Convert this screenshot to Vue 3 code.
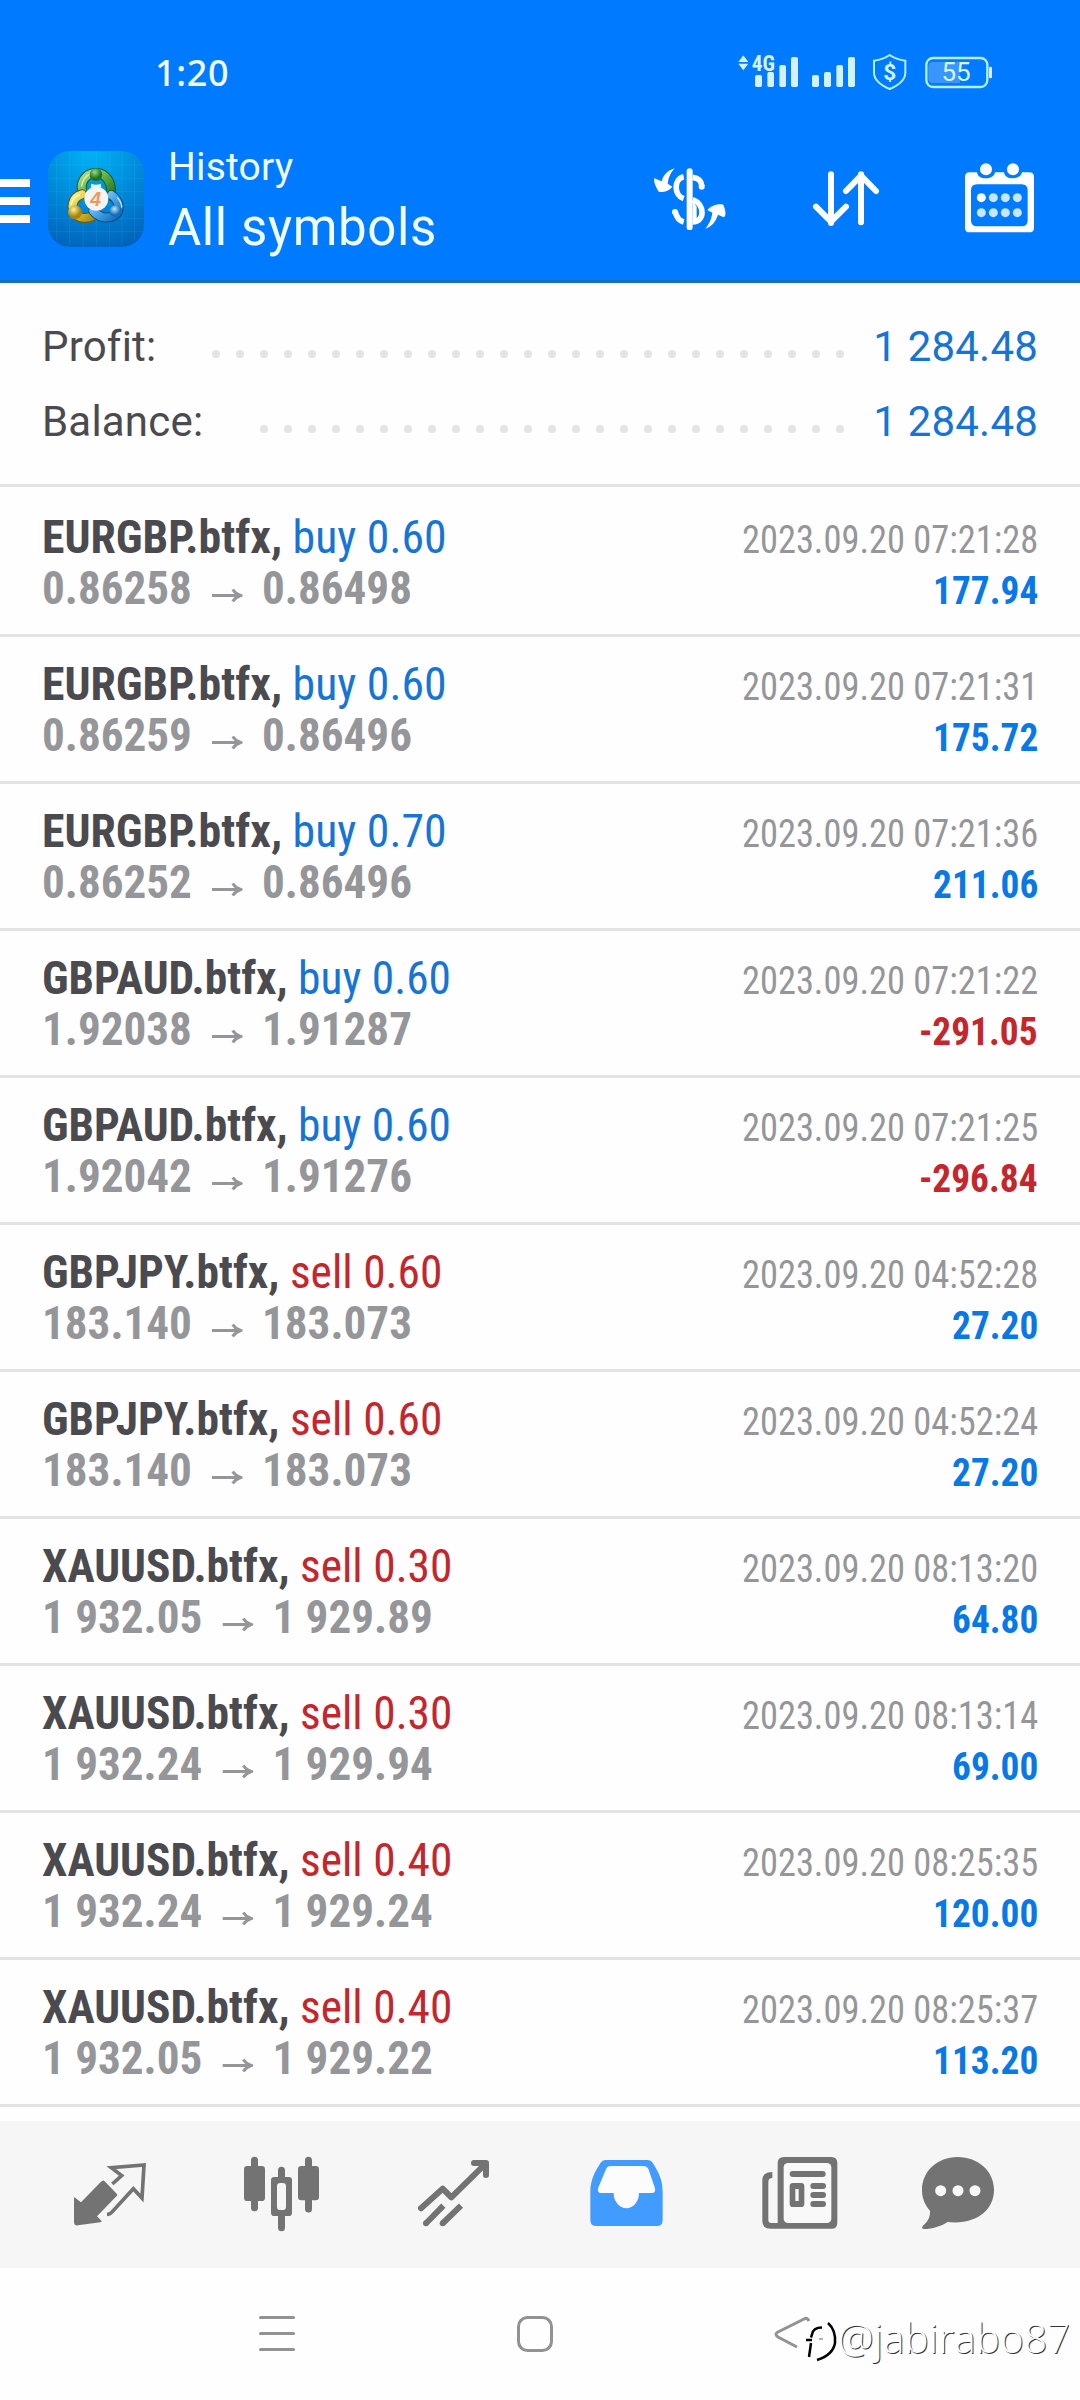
<script setup>
const summary = [
  { label: 'Profit:', value: '1 284.48', dots: 27 },
  { label: 'Balance:', value: '1 284.48', dots: 25 },
]

const raw = [
  ['EURGBP', 'buy 0.60', '0.86258', '0.86498', '2023.09.20 07:21:28', '177.94'],
  ['EURGBP', 'buy 0.60', '0.86259', '0.86496', '2023.09.20 07:21:31', '175.72'],
  ['EURGBP', 'buy 0.70', '0.86252', '0.86496', '2023.09.20 07:21:36', '211.06'],
  ['GBPAUD', 'buy 0.60', '1.92038', '1.91287', '2023.09.20 07:21:22', '-291.05'],
  ['GBPAUD', 'buy 0.60', '1.92042', '1.91276', '2023.09.20 07:21:25', '-296.84'],
  ['GBPJPY', 'sell 0.60', '183.140', '183.073', '2023.09.20 04:52:28', '27.20'],
  ['GBPJPY', 'sell 0.60', '183.140', '183.073', '2023.09.20 04:52:24', '27.20'],
  ['XAUUSD', 'sell 0.30', '1 932.05', '1 929.89', '2023.09.20 08:13:20', '64.80'],
  ['XAUUSD', 'sell 0.30', '1 932.24', '1 929.94', '2023.09.20 08:13:14', '69.00'],
  ['XAUUSD', 'sell 0.40', '1 932.24', '1 929.24', '2023.09.20 08:25:35', '120.00'],
  ['XAUUSD', 'sell 0.40', '1 932.05', '1 929.22', '2023.09.20 08:25:37', '113.20'],
]
const deals = raw.map(([symbol, side, open, close, time, profit]) => ({
  symbol: symbol + '.btfx,', side, open, close, time, profit,
  euro: symbol === 'EURGBP',
  sell: side.startsWith('sell'), loss: profit.startsWith('-'),
}))
</script>

<template>
  <div class="screen">
    <header class="header">
      <div class="status">
        <span class="clock">1:20</span>
        <svg class="status-icons" width="320" height="70" viewBox="0 0 960 210">
          <g fill="#d3f1ff">
            <path d="M115 66 130 46l15 20zM115 71h30l-15 20z" />
            <text x="155" y="92" class="net">4G</text>
            <rect x="165" y="105" width="21" height="36" rx="5" />
            <rect x="202" y="96" width="20" height="45" rx="5" />
            <rect x="238" y="75" width="20" height="66" rx="5" />
            <rect x="273" y="51" width="21" height="90" rx="5" />
            <rect x="336" y="105" width="21" height="36" rx="5" />
            <rect x="372" y="96" width="21" height="45" rx="5" />
            <rect x="409" y="75" width="20" height="66" rx="5" />
            <rect x="444" y="51" width="21" height="90" rx="5" />
            <text x="569" y="119" class="dollar">$</text>
            <rect x="867" y="80" width="9" height="35" rx="4" />
          </g>
          <path d="M569 45C583 55 600 60 616 62V98c0 24-22 38-47 49-25-11-47-25-47-49V62c16-2 33-7 47-17z" fill="none" stroke="#b5f0ff" stroke-width="6" />
          <path d="M698 66h82v63h-82q-13 0-13-13V79q0-13 13-13z" fill="#3a96ff" />
          <rect x="679" y="54" width="183" height="87" rx="20" fill="none" stroke="#b5f0ff" stroke-width="7" />
          <text x="768" y="123" class="level" fill="#d3f6ff">55</text>
        </svg>
      </div>
      <div class="appbar">
        <svg class="burger" width="30" height="44" viewBox="0 0 30 44" fill="#fff">
          <path d="M0 0h30v8H0zM0 18h30v8H0zM0 36h30v8H0z" />
        </svg>
        <svg class="logo" width="96" height="96" viewBox="0 0 288 288">
          <defs>
            <radialGradient id="tile" cx=".45" cy="0" r="1.05">
              <stop offset="0" stop-color="#00b4f4" />
              <stop offset=".5" stop-color="#008bda" />
              <stop offset="1" stop-color="#0062bb" />
            </radialGradient>
            <linearGradient id="green" x2="1" y2="1"><stop stop-color="#b8e08f" /><stop offset=".5" stop-color="#5cad45" /><stop offset="1" stop-color="#207522" /></linearGradient>
            <linearGradient id="gold" x2="1" y2="1"><stop stop-color="#f5f08a" /><stop offset=".6" stop-color="#d0b626" /><stop offset="1" stop-color="#a48612" /></linearGradient>
            <linearGradient id="sky" x2="1" y2="1"><stop stop-color="#a8dcff" /><stop offset=".5" stop-color="#49a5e8" /><stop offset="1" stop-color="#126bb8" /></linearGradient>
            <radialGradient id="greenBall" cx=".4" cy=".3"><stop stop-color="#9bd889" /><stop offset="1" stop-color="#1e7425" /></radialGradient>
            <radialGradient id="goldBall" cx=".4" cy=".3"><stop stop-color="#fff29a" /><stop offset="1" stop-color="#a9860b" /></radialGradient>
            <radialGradient id="skyBall" cx=".4" cy=".3"><stop stop-color="#b8e6ff" /><stop offset="1" stop-color="#156db9" /></radialGradient>
          </defs>
          <rect width="288" height="288" rx="66" fill="url(#tile)" />
          <path d="M26 20v248M65 4v280M105 0v288M145 0v288M185 0v288M222 4v280M260 20v248M4 42h280M0 82h288M0 122h288M0 162h288M0 202h288M4 242h280" stroke="#5cc8ff" stroke-opacity=".18" stroke-width="2" fill="none" />
          <g fill="none" stroke-linecap="round">
            <path d="M104 124C94 96 112 66 144 66s52 34 42 68" stroke="#165b27" stroke-width="30" />
            <path d="M104 124C94 96 112 66 144 66s52 34 42 68" stroke="url(#green)" stroke-width="24" />
            <path d="M102 130c-30 8-38 44-14 64 14 10 38 9 54-4" stroke="#655c0c" stroke-width="30" />
            <path d="M102 130c-30 8-38 44-14 64 14 10 38 9 54-4" stroke="url(#gold)" stroke-width="24" />
            <path d="M190 132c26 18 30 48 8 62-22 12-48 4-62-14" stroke="#0b4a8a" stroke-width="30" />
            <path d="M190 132c26 18 30 48 8 62-22 12-48 4-62-14" stroke="url(#sky)" stroke-width="24" />
            <path d="M101 105c3-20 12-30 24-35" stroke="#d6f3b8" stroke-width="4" />
            <path d="M70 160c3-16 12-24 24-28" stroke="#fdf9b8" stroke-width="4" />
            <path d="M208 140c9 10 13 18 13 28" stroke="#c9ecff" stroke-width="4" />
          </g>
          <path d="M130 98q14 6 28 0l2 12h-32z" fill="#e8f6e4" />
          <circle cx="144" cy="71" r="19" fill="url(#greenBall)" />
          <circle cx="81" cy="184" r="21" fill="url(#goldBall)" />
          <circle cx="203" cy="181" r="18" fill="url(#skyBall)" />
          <circle cx="145" cy="143" r="36" fill="#f5f4f4" />
          <text x="143" y="164" class="four">4</text>
        </svg>
        <div class="titles">
          <span class="sub">History</span>
          <span class="main">All symbols</span>
        </div>
        <svg class="act-dollar" width="74" height="62" viewBox="0 0 222 186" fill="none" stroke="#fff">
          <path d="M110 10V178" stroke-width="18" stroke-linecap="round" />
          <path d="M92 26C62 32 62 82 92 92M119 28c17 2 26 9 28 27M119 95c38 14 37 67 0 67M92 162c-13-3-21-14-25-29" stroke-width="17" />
          <g stroke="none" fill="#fff">
            <circle cx="146" cy="56" r="9" /><circle cx="66" cy="132" r="9" />
            <path d="M119 98l12 18v38l-12 11zM65 1C44 8 32 19 26 40L4 31C1 43 9 58 18 72q27 2 40-16L44 47C46 28 53 14 65 1zM157 182c21-7 32-23 38-42l17 8c8-5 7-18-1-38-18-5-38 4-48 16l15 8c-3 20-9 33-21 48z" />
          </g>
        </svg>
        <svg class="act-sort" width="68" height="56" viewBox="0 0 204 168" fill="none" stroke="#fff" stroke-width="18" stroke-linecap="round" stroke-linejoin="round">
          <path d="M57 13v146M12 110l45 45 45-45M147 157V13M102 63l45-46 45 46" />
        </svg>
        <svg class="act-cal" width="70" height="70" viewBox="0 0 210 210">
          <path fill="#fff" fill-rule="evenodd" d="M14 28h22c2 12 12 18 26 18s26-6 28-18h27c2 12 12 18 26 18s26-6 28-18h22q14 0 14 14V194q0 14-14 14H14q-14 0-14-14V42q0-14 14-14zM36 64q-18 0-18 18v90q0 18 18 18H170q18 0 18-18V82q0-18-18-18z" />
          <circle cx="63" cy="19" r="18" fill="#fff" /><circle cx="144" cy="19" r="18" fill="#fff" />
          <circle cx="49" cy="104" r="13.5" fill="#fff" />
          <g fill="#c5e7ff">
            <circle cx="85" cy="104" r="13.5" /><circle cx="121" cy="104" r="13.5" /><circle cx="157" cy="104" r="13.5" />
            <circle cx="49" cy="149" r="13.5" /><circle cx="85" cy="149" r="13.5" /><circle cx="121" cy="149" r="13.5" /><circle cx="157" cy="149" r="13.5" />
          </g>
        </svg>
      </div>
    </header>

    <section class="summary">
      <div v-for="s in summary" :key="s.label" class="sum-row">
        <span class="sum-label">{{ s.label }}</span>
        <span class="dots"><i v-for="n in s.dots" :key="n" /></span>
        <span class="sum-value">{{ s.value }}</span>
      </div>
    </section>

    <main class="deals">
      <article v-for="(d, i) in deals" :key="i" class="deal">
        <div class="line">
          <span class="title" :class="{ euro: d.euro }"><b class="symbol">{{ d.symbol }}</b> <span class="side" :class="{ red: d.sell }">{{ d.side }}</span></span>
          <span class="time">{{ d.time }}</span>
        </div>
        <div class="line">
          <span class="prices">{{ d.open }}<svg class="arrow" width="32" height="15" viewBox="0 0 31 15" preserveAspectRatio="none"><path d="M0 7.5H28M21 1.5q3 4.500 8 6-5 1.500-8 6" fill="none" stroke="#949699" stroke-width="3" /></svg>{{ d.close }}</span>
          <span class="profit" :class="{ red: d.loss }">{{ d.profit }}</span>
        </div>
      </article>
    </main>

    <nav class="tabs">
      <svg width="500" height="147" viewBox="0 3 1500 441" fill="#737373">
        <path d="M188 182q3-1 6 2l36 37q3 4 0 7l-59 61 13 13q3 4-3 5l-67 9q-12 2-12-10V231l21 16 60-62z" />
        <path d="M217 192l28-25-31-24 98-8-6 99-26-28-65 71q-5 6-14 6" fill="none" stroke="#737373" stroke-width="11" />
        <path d="M622 138h11v-17a10.500 10.500 0 0 1 21 0v17h11q10 0 10 10v85q0 10-10 10h-11v20a10.500 10.500 0 0 1-21 0v-20h-11q-10 0-10-10v-85q0-10 10-10zM784 138h11v-17a10.500 10.500 0 0 1 21 0v17h11q10 0 10 10v83q0 10-10 10h-11v26a10.500 10.500 0 0 1-21 0v-26h-11q-10 0-10-10v-83q0-10 10-10z" />
        <path fill-rule="evenodd" d="M703 171h11v-20a10.500 10.500 0 0 1 21 0v20h11q10 0 10 10v97q0 10-10 10h-11v35a10.500 10.500 0 0 1-21 0v-35h-11q-10 0-10-10v-97q0-10 10-10zM721 189q-10 0-10 10v61q0 10 10 10h7q10 0 10-10v-61q0-10-10-10z" />
        <g fill="none" stroke="#737373" stroke-width="18">
          <path d="M1302 129h36v36M1143 265l65-59 26 26 103-101" stroke-linecap="round" stroke-linejoin="round" />
          <path d="M1159 309l51-52M1209 309l54-52" />
        </g>
        <circle cx="1158" cy="310" r="9" /><circle cx="1208" cy="310" r="9" />
      </svg>
      <svg width="500" height="147" viewBox="0 3 1500 441" fill="#737373">
        <path fill="#429bff" d="M196 120H324q9 0 14 8c18 29 30 51 30 88v84q0 18-18 18H169q-18 0-18-18v-84c0-37 14-62 31-88q5-8 14-8z" />
        <path fill="#fcfcfc" d="M213 138h98q10 0 14 8l20 59q3 14-9 14h-39a37.500 45 0 0 1-76 0h-38q-12 0-9-14l24-57q4-10 15-10z" />
        <path d="M732 111H874q18 0 18 18V308q0 18-18 18H691q-24 0-24-24V180q0-24 30-24V174q-12 0-12 12V300q0 9 9 9h18q2 0 1-6V129q0-18 19-18z" />
        <rect x="731" y="129" width="143" height="180" rx="13" fill="#f9f9f9" />
        <rect x="749" y="153" width="108" height="18" rx="9" />
        <path fill-rule="evenodd" d="M759 189h24q10 0 10 10v52q0 10-10 10h-24q-10 0-10-10v-52q0-10 10-10zM766 207v36h10v-36z" />
        <rect x="811" y="189" width="47" height="18" rx="9" /><rect x="811" y="216" width="47" height="18" rx="9" /><rect x="811" y="243" width="47" height="18" rx="9" />
        <path d="M1253 111c62 0 109 43 109 99 0 59-52 105-139 96-20 13-46 21-70 21q-11-1-4-10c16-13 22-29 21-45-16-18-24-38-24-62 0-56 46-99 107-99z" />
        <g fill="#f9f9f9"><circle cx="1202" cy="212" r="16.500" /><circle cx="1254" cy="212" r="16.500" /><circle cx="1305" cy="212" r="16.500" /></g>
      </svg>
    </nav>

    <footer class="sysnav">
      <svg width="1080" height="132" viewBox="0 0 1080 132" fill="none" stroke="#929292" stroke-width="3">
        <path d="M260.500 49.500h33M260.500 65.500h33M260.500 81.500h33" stroke-linecap="round" />
        <rect x="518.500" y="49.500" width="33" height="33" rx="9" />
        <path d="M809 53q-2-4-5-2l-26 13q-4 2 0 5l19 10" />
      </svg>
      <div class="watermark">
        <svg width="34" height="42" viewBox="0 0 34 42" fill="none" stroke-width="3">
          <path d="M17 4q-9 1-10 9L4 34M0 17h6M22 1q8 7 7 19-2 12-17 17" stroke="#fff" stroke-width="4" />
          <path d="M18 6.500q-9 0-10 7l-1 3M2 19h6M7 22L5 36M24 2q8 7 7 20-2 12-18 17" stroke="#000" stroke-width="2.500" />
          <path d="M15 18h4" stroke="#999" stroke-width="1.500" />
        </svg>
        <span class="handle">@jabirabo87</span>
      </div>
    </footer>
  </div>
</template>

<style>
body { margin: 0; background: #fff; }
</style>

<style scoped>
.screen {
  width: 1080px;
  height: 2400px;
  display: flex;
  flex-direction: column;
  overflow: hidden;
  background: #fefefe;
  font-family: Roboto, "Liberation Sans", sans-serif;
  color: #4a4a4f;
}
svg { display: block; flex: none; }

.header {
  box-sizing: border-box;
  height: 283px;
  background: #007aff;
  border-bottom: 3px solid #1a6ec2;
  color: #f0fdff;
}
.status {
  height: 110px;
  box-sizing: border-box;
  padding: 40px 60px 0 155px;
  display: flex;
  justify-content: space-between;
}
.clock {
  font: 500 36px/65px "Noto Sans", sans-serif;
  letter-spacing: 0.7px;
}
.net { font: 700 64px "Roboto", sans-serif; font-stretch: 75%; }
.dollar { font: 700 68px "Roboto", sans-serif; text-anchor: middle; }
.level { font: 400 78px "Roboto", sans-serif; text-anchor: middle; }
.four { font: italic 700 58px "Liberation Sans", sans-serif; text-anchor: middle; fill: #f09a55; }

.appbar { display: flex; align-items: flex-start; }
.burger { margin-top: 69px; }
.logo { margin: 41px 0 0 18px; }
.titles {
  display: flex;
  flex-direction: column;
  width: 300px;
  margin: 34px 0 0 24px;
  white-space: nowrap;
}
.sub { font-size: 39px; line-height: 46px; letter-spacing: 0.2px; }
.main { font-size: 51px; line-height: 76px; letter-spacing: 0.6px; }
.act-dollar { margin: 58px 0 0 185px; }
.act-sort { margin: 60px 0 0 85px; }
.act-cal { margin: 53px 0 0 85px; }

.summary {
  box-sizing: border-box;
  height: 204px;
  padding: 26px 42px 0;
  border-bottom: 3px solid #e4e4e4;
}
.sum-row {
  display: flex;
  height: 75px;
  line-height: 75px;
  font-size: 42px;
  letter-spacing: 0.2px;
}
.dots {
  flex: 1;
  display: flex;
  justify-content: flex-end;
  gap: 16px;
  padding: 41px 29px 0 0;
}
.dots i { width: 8px; height: 8px; border-radius: 50%; background: #e4e4e4; }
.sum-value { color: #1674d6; }

.deals { padding-top: 3px; height: 1631px; }
.deal {
  box-sizing: border-box;
  height: 147px;
  padding: 21px 42px 0;
  border-bottom: 3px solid #e4e4e4;
  font-stretch: 75%;
}
.line {
  display: flex;
  justify-content: space-between;
  align-items: baseline;
  height: 51px;
  line-height: 51px;
  font-size: 47px;
  white-space: nowrap;
}
.title { transform: scaleX(0.966); transform-origin: left; }
.title.euro { transform: scaleX(0.973); }
.symbol { font-weight: 700; }
.side { color: #1674d6; }
.time {
  font-size: 39px;
  color: #949699;
  transform: scaleX(0.934);
  transform-origin: right;
}
.prices {
  font-weight: 700;
  color: #949699;
  transform: scaleX(0.96);
  transform-origin: left;
}
.arrow { display: inline-block; margin: 0 20px 0 21px; vertical-align: 1px; }
.profit {
  font-size: 39.5px;
  font-weight: 700;
  color: #0878e8;
  transform: scaleX(0.945);
  transform-origin: right;
}
.side.red, .profit.red { color: #c4262b; }

.tabs {
  height: 147px;
  flex: none;
  display: flex;
  justify-content: center;
  background: #f6f6f6;
}
.sysnav { position: relative; height: 132px; }
.watermark {
  position: absolute;
  left: 804px;
  top: 44px;
  display: flex;
  align-items: flex-start;
}
.watermark svg { margin-top: 9px; }
.handle {
  font: 300 40px/52px "Open Sans", "Noto Sans", sans-serif;
  letter-spacing: 0.400px;
  color: #fff;
  text-shadow: 1px 1px 0 #333;
}
</style>
